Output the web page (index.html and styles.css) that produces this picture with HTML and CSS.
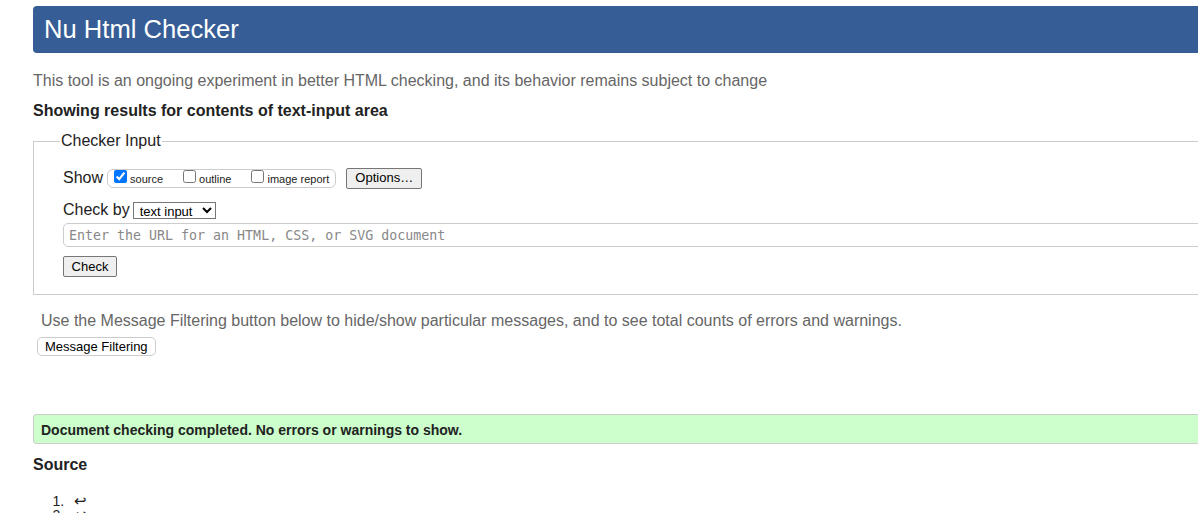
FILE: index.html
```html
<!DOCTYPE html>
<html lang="en">
<head>
<meta charset="utf-8">
<title>Nu Html Checker</title>
<link rel="stylesheet" href="styles.css">
</head>
<body>
<div class="page">
  <h1 class="banner">Nu Html Checker</h1>
  <p class="intro">This tool is an ongoing experiment in better HTML checking, and its behavior remains subject to change</p>
  <p class="showing">Showing results for contents of text-input area</p>

  <fieldset class="checker">
    <legend class="legend">Checker Input</legend>
    <div class="row show-row">
      <span class="label">Show</span>
      <span class="opts">
        <label class="opt"><input type="checkbox" checked><span>source</span></label>
        <label class="opt"><input type="checkbox"><span>outline</span></label>
        <label class="opt"><input type="checkbox"><span>image report</span></label>
      </span>
      <button class="btn options">Options…</button>
    </div>
    <div class="row checkby-row">
      <span class="label">Check by</span>
      <select class="select"><option>text input</option></select>
    </div>
    <input class="url" type="text" placeholder="Enter the URL for an HTML, CSS, or SVG document">
    <button class="btn check">Check</button>
  </fieldset>

  <p class="filter-note">Use the Message Filtering button below to hide/show particular messages, and to see total counts of errors and warnings.</p>
  <button class="btn filter">Message Filtering</button>

  <div class="success">Document checking completed. No errors or warnings to show.</div>

  <h2 class="source-h">Source</h2>
  <ol class="source">
    <li><span class="ret">↩</span></li>
    <li><span class="ret">↩</span></li>
  </ol>
</div>
</body>
</html>
```

FILE: styles.css
```css
html {
  overflow: hidden;
}
body {
  margin: 0;
  font-family: "Liberation Sans", Arial, sans-serif;
  color: #222;
  background: #fff;
}
.page {
  width: 1300px;
  padding: 6px 0 0 33px;
}
.banner {
  margin: 0;
  height: 47px;
  box-sizing: border-box;
  padding: 8px 0 0 11px;
  background: #365d95;
  color: #fff;
  font-size: 25.6px;
  font-weight: normal;
  line-height: 30px;
  border-radius: 4px 0 0 4px;
}
.intro {
  margin: 18px 0 0;
  color: #666;
  font-size: 16px;
  line-height: 20px;
}
.showing {
  margin: 10px 0 0;
  font-weight: bold;
  font-size: 16px;
  line-height: 20px;
}
.checker {
  margin: 11px 0 0;
  padding: 16px 0 17px 29px;
  border: 1px solid #ccc;
  border-radius: 0;
  min-width: 0;
}
.legend {
  margin-left: -3px;
  padding: 0 1px;
  font-size: 16px;
  color: #222;
}
.row {
  display: flex;
  align-items: center;
}
.label {
  font-size: 16px;
  line-height: 20px;
}
.show-row {
  height: 24px;
}
.opts {
  display: flex;
  align-items: center;
  margin-left: 4px;
  height: 17px;
  padding: 0 6px 0 6px;
  border: 1px solid #ccc;
  border-radius: 6px;
}
.opt {
  display: flex;
  align-items: center;
  font-size: 11px;
  margin-right: 20px;
}
.opt:last-child {
  margin-right: 0;
}
.opt input {
  margin: 0 3px 3px 0;
  width: 13px;
  height: 13px;
}
.opt span {
  padding-top: 2px;
}
.btn {
  font-family: "Liberation Sans", Arial, sans-serif;
  font-size: 13px;
  color: #000;
  background: #efefef;
  border: 1px solid #767676;
  border-radius: 2px;
  padding: 1px 6px;
  line-height: 16px;
}
.options {
  margin-left: 10px;
  height: 21px;
  width: 76px;
  padding: 0;
}
.checkby-row {
  margin-top: 10px;
}
.select {
  margin-left: 3px;
  height: 17px;
  width: 83px;
  font-family: "Liberation Sans", Arial, sans-serif;
  font-size: 13px;
  padding: 0 0 0 2px;
  border: 1px solid #767676;
  border-radius: 0;
  background: #fff;
  color: #000;
}
.url {
  display: block;
  box-sizing: border-box;
  width: 1260px;
  height: 24px;
  margin-top: 3px;
  padding: 0 5px;
  border: 1px solid #ccc;
  border-radius: 5px 0 0 5px;
  font-family: "DejaVu Sans Mono", monospace;
  font-size: 13.3px;
}
.url::placeholder {
  color: #888;
}
.check {
  display: block;
  margin-top: 9px;
  height: 21px;
  width: 54px;
  padding: 0;
}
.filter-note {
  margin: 16px 0 0 8px;
  color: #666;
  font-size: 16px;
  line-height: 20px;
}
.filter {
  display: block;
  margin: 6px 0 0 4px;
  height: 19px;
  padding: 0 7px;
  background: #fff;
  border: 1px solid #ccc;
  border-radius: 5px;
  font-size: 13px;
}
.success {
  margin-top: 58px;
  height: 30px;
  box-sizing: border-box;
  padding: 7px 0 0 7px;
  background: #ccffcc;
  border: 1px solid #ccc;
  border-radius: 3px 0 0 3px;
  font-weight: bold;
  font-size: 14px;
  line-height: 16px;
}
.source-h {
  margin: 11px 0 0;
  font-size: 16px;
  line-height: 20px;
}
.source {
  margin: 19px 0 0;
  padding-left: 35px;
  font-size: 14px;
  line-height: 14px;
  color: #222;
}
.ret {
  margin-left: 6px;
  font-size: 15px;
  line-height: 14px;
}
```
